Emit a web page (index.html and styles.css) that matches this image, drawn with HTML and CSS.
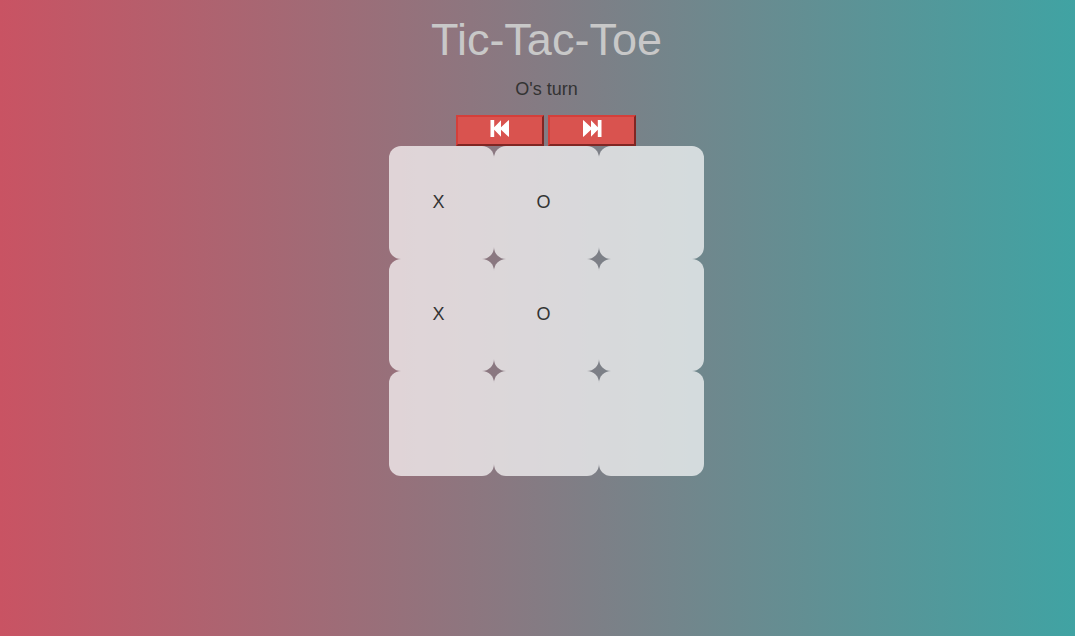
FILE: index.html
```html
<!DOCTYPE html>
<html lang="en">
<head>
<meta charset="utf-8">
<title>Tic-Tac-Toe</title>
<link rel="stylesheet" href="styles.css">
</head>
<body>
<main class="game">
  <h1 class="title">Tic-Tac-Toe</h1>
  <p class="status">O's turn</p>
  <div class="controls">
    <button class="step" type="button" aria-label="Previous move">
      <svg class="icon" viewBox="0 0 20 17" aria-hidden="true"><path d="M.5 0H4.200V7.300L11 .3V7.300L18.500 .3H19V16.700H18.500L11 9.700V16.700L4.200 9.700V17H.5Z"/></svg>
    </button>
    <button class="step" type="button" aria-label="Next move">
      <svg class="icon" viewBox="0 0 20 17" aria-hidden="true"><path d="M19.500 0H15.800V7.300L9 .3V7.300L1.500 .3H1V16.700H1.500L9 9.700V16.700L15.800 9.700V17H19.500Z"/></svg>
    </button>
  </div>
  <div class="board">
    <button class="cell" type="button">X</button>
    <button class="cell" type="button">O</button>
    <button class="cell" type="button" aria-label="Empty"></button>
    <button class="cell" type="button">X</button>
    <button class="cell" type="button">O</button>
    <button class="cell" type="button" aria-label="Empty"></button>
    <button class="cell" type="button" aria-label="Empty"></button>
    <button class="cell" type="button" aria-label="Empty"></button>
    <button class="cell" type="button" aria-label="Empty"></button>
  </div>
</main>
</body>
</html>
```
FILE: styles.css
```css
* {
  box-sizing: border-box;
}

body {
  margin: 0;
  min-height: 100vh;
  background: linear-gradient(to right, #c95363, #40a3a3);
  color: #333;
  font-family: "Liberation Sans", Arial, sans-serif;
  font-size: 18px;
  line-height: 26px;
}

.game {
  display: flex;
  flex-direction: column;
  align-items: center;
  padding: 15px 0 0 18px;
}

.title {
  margin: 0 0 11px;
  color: #c8c8c8;
  font-size: 45px;
  font-weight: 400;
  line-height: 50px;
}

.status {
  margin: 0 0 13px;
}

.controls {
  display: flex;
  gap: 4px;
  padding-right: 1px;
}

.step {
  display: flex;
  align-items: center;
  justify-content: center;
  width: 88px;
  height: 31px;
  padding: 0 0 4px;
  border: 2px outset #d43f3a;
  background: #d9534f;
}

.icon {
  width: 20px;
  height: 17px;
  fill: #fff;
}

.board {
  display: grid;
  grid-template-columns: repeat(3, 105px);
  grid-template-rows: 113px 112px 105px;
}

.cell {
  padding: 0 6px 2px 0;
  border: 0;
  border-radius: 12px;
  background: rgba(255, 255, 255, 0.7);
  color: #333;
  font: inherit;
}
```
